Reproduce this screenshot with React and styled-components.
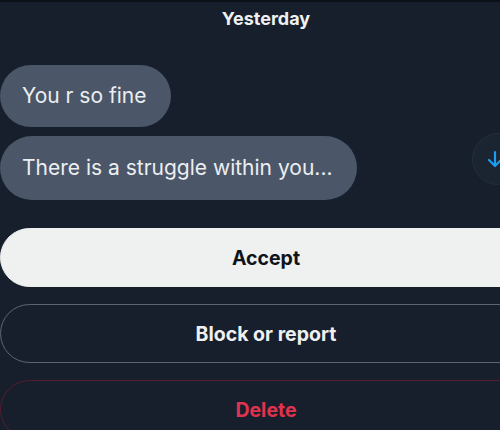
import React from 'react';
import styled, { createGlobalStyle } from 'styled-components';

const GlobalStyle = createGlobalStyle`
  * { box-sizing: border-box; }
  html, body { margin: 0; background: #161f2b; overflow: hidden; }
  body { font-family: Inter, "Noto Sans", sans-serif; }
`;

const Screen = styled.div`
  position: relative;
  width: 532px;
  height: 430px;
  background: #161f2b;
  border-top: 2px solid #0c1118;
  display: flex;
  flex-direction: column;
`;

const DateLabel = styled.div`
  text-align: center;
  color: #eef0f1;
  font-size: 18px;
  font-weight: 700;
  line-height: 20px;
  margin-top: 7px;
`;

const Messages = styled.div`
  display: flex;
  flex-direction: column;
  align-items: flex-start;
  gap: 9px;
  margin-top: 36px;
`;

const Bubble = styled.div`
  background: #4b5768;
  color: #eceef0;
  font-size: 21px;
  line-height: 24px;
  padding: 0 25px 0 22px;
  border-radius: 32px;
  height: ${p => p.$h}px;
  display: flex;
  align-items: center;
`;

const ScrollDown = styled.div`
  position: absolute;
  left: 472px;
  top: 131px;
  width: 52px;
  height: 52px;
  border-radius: 50%;
  background: #1b2532;
  border: 1px solid #222e3c;
  display: flex;
  align-items: center;
  padding-left: 14px;
  color: #1d9bf0;
`;

const Actions = styled.div`
  display: flex;
  flex-direction: column;
  gap: 17px;
  margin-top: 28px;
`;

const Button = styled.div`
  height: 59px;
  border-radius: 30px;
  display: flex;
  align-items: center;
  justify-content: center;
  font-size: 19.5px;
  font-weight: 700;
  background: ${p => (p.$variant === 'primary' ? '#eff1f1' : 'transparent')};
  color: ${p =>
    p.$variant === 'primary' ? '#0f1419' : p.$variant === 'danger' ? '#e0334f' : '#eef0f1'};
  border: 1.5px solid
    ${p =>
      p.$variant === 'primary' ? '#eff1f1' : p.$variant === 'danger' ? '#5a1b30' : '#5b6775'};
`;

export default function App() {
  return (
    <>
      <GlobalStyle />
      <Screen>
        <DateLabel>Yesterday</DateLabel>

        <Messages>
          <Bubble $h={62}>You r so fine</Bubble>
          <Bubble $h={64}>There is a struggle within you...</Bubble>
        </Messages>

        <ScrollDown>
          <svg width="16" height="18" viewBox="0 0 16 18" fill="none" stroke="currentColor" strokeWidth="2.2" strokeLinecap="round" strokeLinejoin="round">
            <path d="M8 2v14M2 10l6 6 6-6" />
          </svg>
        </ScrollDown>

        <Actions>
          <Button $variant="primary">Accept</Button>
          <Button>Block or report</Button>
          <Button $variant="danger">Delete</Button>
        </Actions>
      </Screen>
    </>
  );
}
